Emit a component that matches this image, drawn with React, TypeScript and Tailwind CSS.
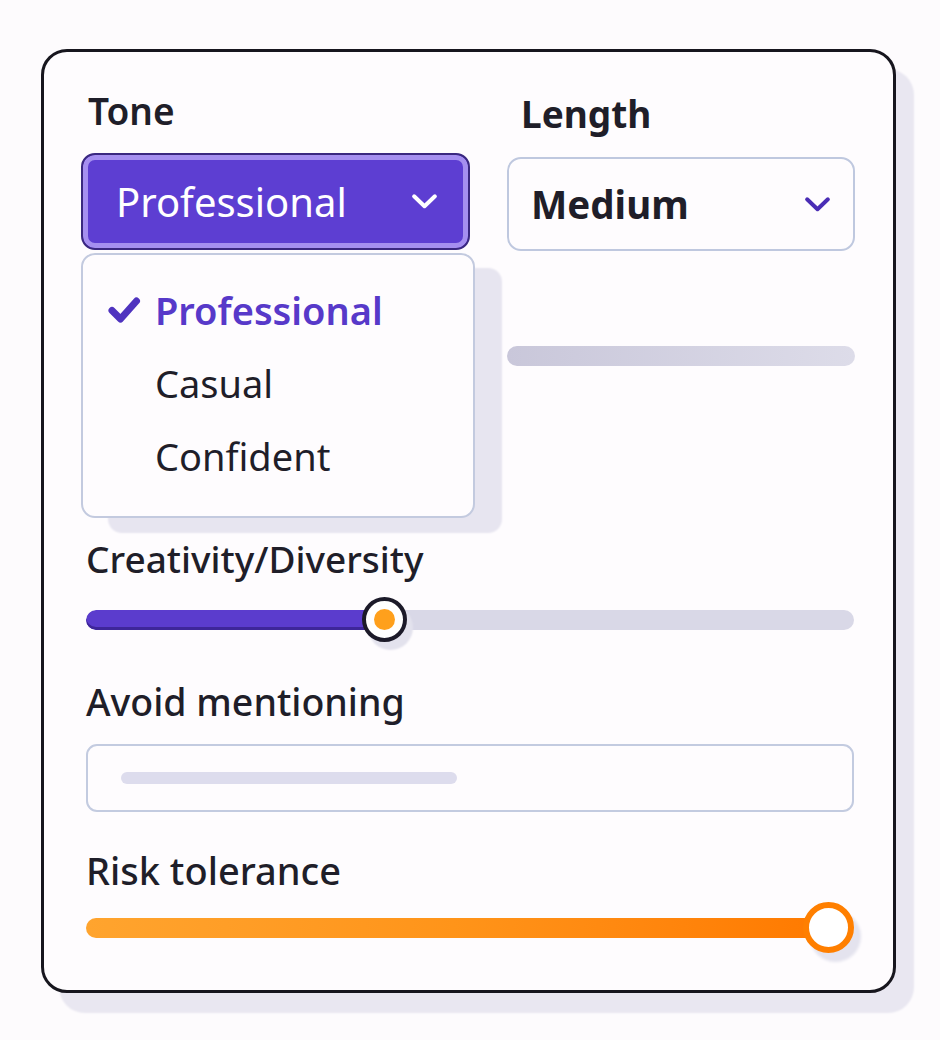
import React from "react";

const font = { fontFamily: '"Noto Sans", "Open Sans", sans-serif' };

function Chevron({ className }: { className?: string }) {
  return (
    <svg viewBox="0 0 28 18" className={className} fill="none" stroke="currentColor" strokeWidth={4.2} strokeLinecap="round" strokeLinejoin="round">
      <path d="M3 3.5 L14 14 L25 3.5" />
    </svg>
  );
}

function Check() {
  return (
    <svg viewBox="0 0 34 28" className="h-[28px] w-[34px] text-[#4f33bf]" fill="none" stroke="currentColor" strokeWidth={7} strokeLinecap="round" strokeLinejoin="round">
      <path d="M5 14.5 L13.5 23 L29.5 5" />
    </svg>
  );
}

function Label({ children, className = "" }: { children: React.ReactNode; className?: string }) {
  return <p className={"h-[37px] leading-none font-medium text-[#1f1e29] " + className}>{children}</p>;
}

export default function App() {
  return (
    <div className="min-h-screen bg-[#fdfbfd] pt-[49px] pl-[41px]" style={font}>
      <div className="w-[855px] rounded-[26px] border-[3px] border-[#17161e] bg-[#fefcfe] pt-[40px] pb-[37px] pl-[42px] pr-[39px] shadow-[18px_20px_2px_#e9e7f1]">
        {/* top row: tone + length */}
        <div className="-ml-[5px] -mr-[1px] flex items-start gap-[37px]">
          <div className="relative w-[389px]">
            <p className="h-[37px] pl-[7px] text-[37px] leading-none font-semibold text-[#1f1e29]">Tone</p>
            <div className="mt-[24px] flex h-[97px] items-center justify-between rounded-[14px] border-2 border-[#3a2880] bg-[#5d3ed2] pl-[33px] pr-[30px] shadow-[inset_0_0_0_5px_#a58ff0]">
              <span className="text-[40px] leading-none text-white">Professional</span>
              <Chevron className="h-[17px] w-[27px] text-white" />
            </div>

            {/* open menu */}
            <div className="absolute left-0 top-full z-10 mt-[3px] h-[265px] w-[394px] rounded-[14px] border-2 border-[#c3cadf] bg-[#fefcfe] pt-[36px] pl-[24px] shadow-[27px_15px_2px_#e7e5f0]">
              <div className="flex flex-col gap-[35px]">
                <div className="flex items-center">
                  <span className="flex w-[48px] items-center">
                    <Check />
                  </span>
                  <span className="text-[38px] leading-none font-semibold text-[#5739c9]">Professional</span>
                </div>
                <div className="flex items-center">
                  <span className="w-[48px]" />
                  <span className="text-[38px] leading-none text-[#1f1e29]">Casual</span>
                </div>
                <div className="flex items-center">
                  <span className="w-[48px]" />
                  <span className="text-[38px] leading-none text-[#1f1e29]">Confident</span>
                </div>
              </div>
            </div>
          </div>

          <div className="w-[348px] pt-[3px]">
            <p className="h-[37px] pl-[14px] text-[37px] leading-none font-bold text-[#1f1e29]">Length</p>
            <div className="mt-[25px] flex h-[94px] items-center justify-between rounded-[14px] border-2 border-[#bfc8df] bg-[#fefcfe] pl-[22px] pr-[22px]">
              <span className="text-[38.5px] leading-none font-bold text-[#1f1e29]">Medium</span>
              <Chevron className="h-[17px] w-[27px] text-[#4a2db5]" />
            </div>
          </div>
        </div>

        {/* hidden row behind menu */}
        <div className="mt-[95px] flex justify-end">
          <div className="-mr-[1px] h-[20px] w-[348px] rounded-full bg-gradient-to-r from-[#c9c7da] to-[#dddce9]" />
        </div>

        {/* creativity */}
        <Label className="mt-[174px] text-[37px]">Creativity/Diversity</Label>
        <div className="relative mt-[20px] flex h-[45px] items-center">
          <div className="flex h-[20px] w-full overflow-hidden rounded-full bg-[#d9d8e7]">
            <div className="h-full w-[300px] rounded-l-full bg-[#5b3ccd] shadow-[inset_0_-3px_0_#3e2699]" />
          </div>
          <div className="absolute left-[276px] top-0 flex h-[45px] w-[45px] items-center justify-center rounded-full border-[4px] border-[#1c1a29] bg-white shadow-[6px_8px_2px_#e3e2ed]">
            <div className="h-[21px] w-[21px] rounded-full bg-[#ffa01c]" />
          </div>
        </div>

        {/* avoid */}
        <Label className="mt-[41px] text-[37.5px]">Avoid mentioning</Label>
        <div className="mt-[24px] flex h-[68px] items-center rounded-[11px] border-2 border-[#c3cbe0] bg-[#fefcfe] pl-[33px]">
          <div className="h-[12px] w-[336px] rounded-full bg-[#dddced]" />
        </div>

        {/* risk */}
        <Label className="mt-[39px] text-[38px]">Risk tolerance</Label>
        <div className="relative mt-[14px] flex h-[51px] items-center">
          <div className="h-[20px] w-[735px] rounded-full bg-gradient-to-r from-[#ffa42e] via-[#ff9419] to-[#ff7a00]" />
          <div className="absolute left-[717px] top-0 h-[51px] w-[51px] rounded-full border-[6px] border-[#ff7f00] bg-white shadow-[7px_9px_3px_#e4e3ee]" />
        </div>
      </div>
    </div>
  );
}
